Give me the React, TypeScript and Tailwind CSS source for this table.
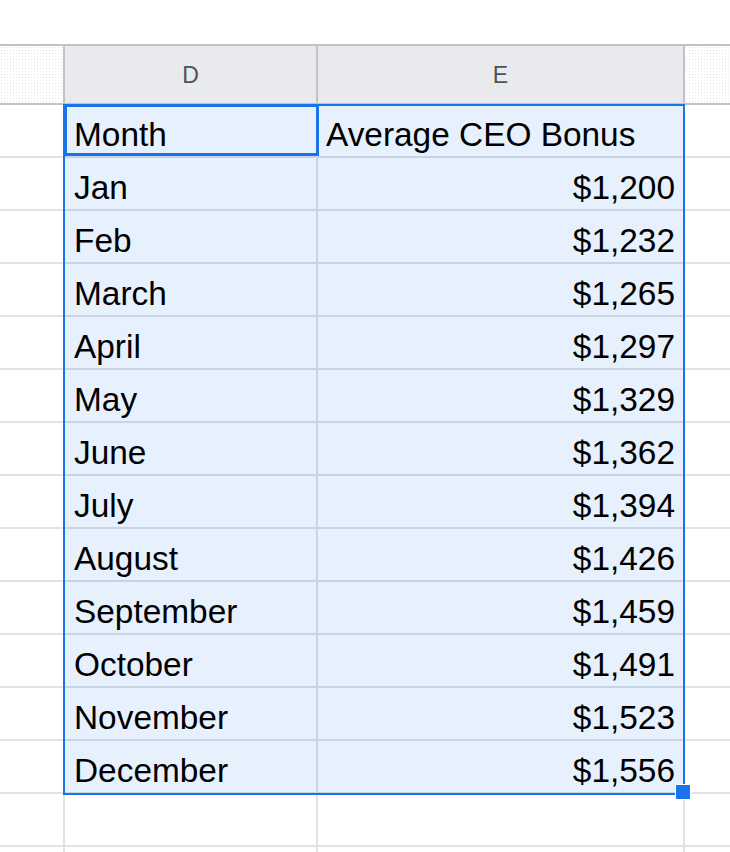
import React from 'react'

const ROWS: [string, string][] = [
  ['Month', 'Average CEO Bonus'],
  ['Jan', '$1,200'],
  ['Feb', '$1,232'],
  ['March', '$1,265'],
  ['April', '$1,297'],
  ['May', '$1,329'],
  ['June', '$1,362'],
  ['July', '$1,394'],
  ['August', '$1,426'],
  ['September', '$1,459'],
  ['October', '$1,491'],
  ['November', '$1,523'],
  ['December', '$1,556'],
]

const pattern =
  'bg-white bg-[radial-gradient(#dfe6ee_0.8px,transparent_0.9px)] bg-[length:3px_3px]'

function Row({ month, value, header }: { month?: string; value?: string; header?: boolean }) {
  const selected = month !== undefined
  const inLine = selected ? 'border-[#c9d4e2]' : 'border-[#e2e2e2]'
  const cellBg = selected ? 'bg-[#e7f0fd]' : 'bg-white'
  return (
    <div className="flex h-[53px] shrink-0">
      <div className="w-[65px] shrink-0 border-r-2 border-b-2 border-[#e2e2e2] bg-white" />
      <div
        className={`w-[253px] shrink-0 border-r-2 border-b-2 ${inLine} ${cellBg} flex items-end pl-[9px] pb-[5px]`}
      >
        <span className="text-[33.4px] leading-[33px] text-black whitespace-nowrap">{month}</span>
      </div>
      <div
        className={`w-[367px] shrink-0 border-r-2 border-b-2 ${inLine} ${cellBg} flex items-end pb-[5px] ${
          header ? 'justify-start pl-[8px]' : 'justify-end pr-[8px]'
        }`}
      >
        <span className="text-[33.4px] leading-[33px] text-black whitespace-nowrap">{value}</span>
      </div>
      <div className="flex-1 border-b-2 border-[#e2e2e2] bg-white" />
    </div>
  )
}

export default function App() {
  return (
    <div className="relative w-[730px] h-[852px] overflow-hidden bg-white font-['Liberation_Sans',Arial,sans-serif]">
      <div className="h-[44px]" />

      {/* column headers */}
      <div className="flex h-[61px] border-t-2 border-b-2 border-[#c2c2c2]">
        <div className={`w-[65px] shrink-0 border-r-2 border-[#c2c2c2] ${pattern}`} />
        <div className="w-[253px] shrink-0 border-r-2 border-[#c2c2c2] bg-[#e8eaed] flex items-center justify-center pt-[2px]">
          <span className="text-[23px] text-[#4f5358]">D</span>
        </div>
        <div className="w-[367px] shrink-0 border-r-2 border-[#c2c2c2] bg-[#e8eaed] flex items-center justify-center pt-[2px]">
          <span className="text-[23px] text-[#4f5358]">E</span>
        </div>
        <div className={`flex-1 ${pattern}`} />
      </div>

      <div className="flex flex-col">
        {ROWS.map(([m, v], i) => (
          <Row key={m} month={m} value={v} header={i === 0} />
        ))}
        <Row />
        <Row />
      </div>

      {/* selection outline */}
      <div className="pointer-events-none absolute left-[63px] top-[104px] w-[622px] h-[691px] border-2 border-[#1a73e8]" />
      {/* active cell */}
      <div className="pointer-events-none absolute left-[64px] top-[104px] w-[255px] h-[52px] border-[3px] border-[#1a73e8]" />
      {/* fill handle */}
      <div className="pointer-events-none absolute left-[675px] top-[784px] w-[16px] h-[16px] border border-white bg-[#1a73e8]" />
    </div>
  )
}
